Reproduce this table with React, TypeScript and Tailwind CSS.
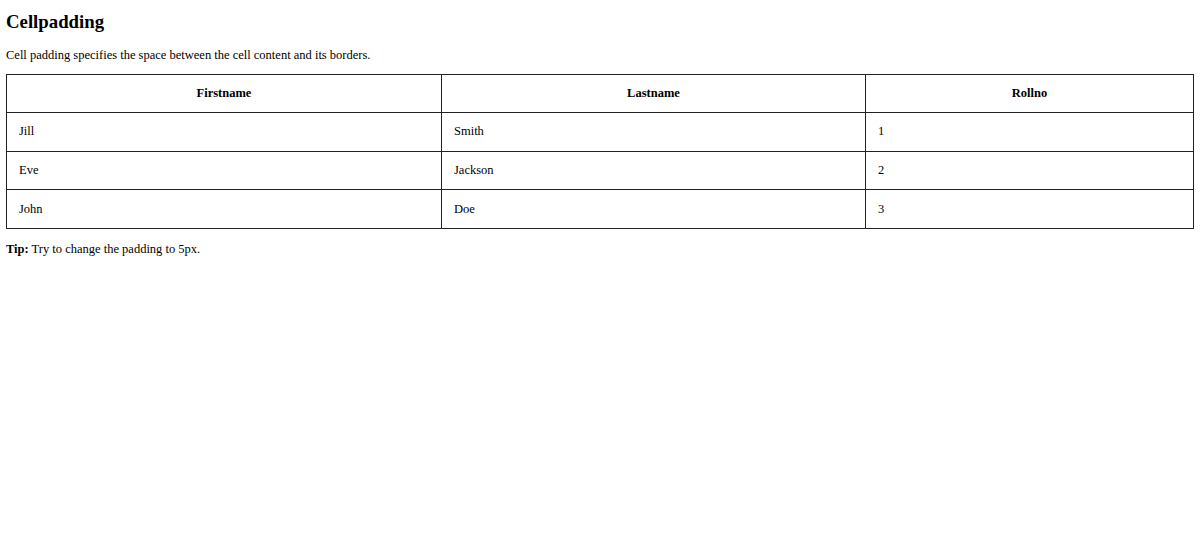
export default function App() {
  const rows = [
    ["Jill", "Smith", "1"],
    ["Eve", "Jackson", "2"],
    ["John", "Doe", "3"],
  ];
  return (
    <div className="min-h-[543px] bg-white px-[6px] pt-[11px] text-black text-[12.5px] leading-[15px] font-['Liberation_Serif',serif]">
      <h2 className="text-[18.8px] leading-[22px] font-bold">Cellpadding</h2>
      <p className="mt-[15px]">Cell padding specifies the space between the cell content and its borders.</p>
      <table className="mt-[11px] w-full border-collapse">
        <thead>
          <tr className="h-[38px]">
            <th className="w-[435px] border border-[#222] px-[12px] font-bold">Firstname</th>
            <th className="w-[424px] border border-[#222] px-[12px] font-bold">Lastname</th>
            <th className="border border-[#222] px-[12px] font-bold">Rollno</th>
          </tr>
        </thead>
        <tbody>
          {rows.map((r, i) => (
            <tr key={i} className={i === 2 ? "h-[39px]" : "h-[38.5px]"}>
              {r.map((c, j) => (
                <td key={j} className="border border-[#222] px-[12px] text-left">
                  {c}
                </td>
              ))}
            </tr>
          ))}
        </tbody>
      </table>
      <p className="mt-[13px]">
        <b>Tip:</b> Try to change the padding to 5px.
      </p>
    </div>
  );
}
